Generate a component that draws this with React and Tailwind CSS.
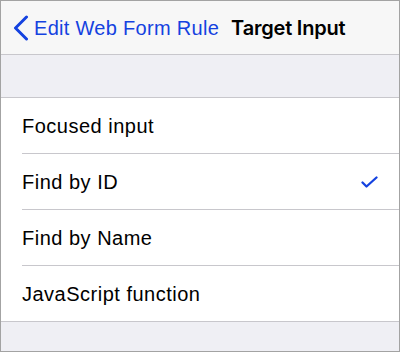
const options = [
  { label: 'Focused input', checked: false },
  { label: 'Find by ID', checked: true },
  { label: 'Find by Name', checked: false },
  { label: 'JavaScript function', checked: false },
];

const font = { fontFamily: '"Liberation Sans", Arial, sans-serif' };

export default function App() {
  return (
    <div
      className="w-[400px] h-[352px] border border-[#a3a3a3] bg-[#efeff4] overflow-hidden flex flex-col"
      style={font}
    >
      <div className="h-[54px] shrink-0 bg-[#f7f7f7] border-b border-[#c8c7cc] flex items-center">
        <svg className="ml-[12px] w-[16px] h-[26px]" viewBox="0 0 16 26" fill="none">
          <path d="M13.5 2 L2.5 13 L13.5 24" stroke="#1442e0" strokeWidth="3" strokeLinecap="round" strokeLinejoin="round" />
        </svg>
        <span className="ml-[5px] text-[20px] text-[#1442e0] tracking-[0.3px]">Edit Web Form Rule</span>
        <span className="ml-[12px] text-[20px] font-semibold text-black font-['Inter',sans-serif] tracking-[-0.2px]">Target Input</span>
      </div>

      <div className="h-[42px] shrink-0" />

      <div className="bg-white border-y border-[#c8c7cc]">
        {options.map((o, i) => (
          <div key={o.label} className="pl-[21px]">
            <div
              className={`flex items-center pr-[21px] ${i < options.length - 1 ? 'h-[56px] border-b border-[#c8c7cc]' : 'h-[55px]'}`}
            >
              <span className="flex-1 text-[20px] text-black tracking-[0.5px]">{o.label}</span>
              {o.checked && (
                <svg className="w-[17px] h-[12px]" viewBox="0 0 17 12" fill="none">
                  <path d="M1.5 6.5 L5.5 10.5 L15.5 1.5" stroke="#1442e0" strokeWidth="2.3" strokeLinecap="round" strokeLinejoin="round" />
                </svg>
              )}
            </div>
          </div>
        ))}
      </div>
    </div>
  );
}
